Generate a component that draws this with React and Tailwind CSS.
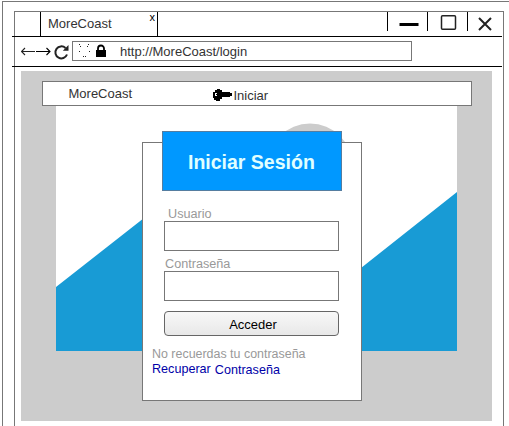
import React from "react";

function TitleBar() {
  return (
    <div className="-ml-[3px] flex h-[25px] w-[490px] border-b border-black pl-[3px]">
      <div className="w-[26px] shrink-0 border-r border-black" />
      <div className="flex w-[117px] shrink-0 justify-between border-r border-black pl-[7px] pr-[2px]">
        <span className="text-[13px] leading-[23px]">MoreCoast</span>
        <span className="text-[11px] leading-[10px] text-black">x</span>
      </div>
      <div className="ml-auto flex h-[19px] shrink-0">
        <div className="w-10 border-l border-black">
          <svg width="39" height="19" viewBox="0 0 39 19">
            <path d="M11.500 12.500H30.500" stroke="#000" strokeWidth="3" />
          </svg>
        </div>
        <div className="w-10 border-l border-black">
          <svg width="39" height="19" viewBox="0 0 39 19">
            <rect x="13.500" y="3.800" width="14" height="13.500" rx="1" fill="none" stroke="#222" strokeWidth="1.500" />
          </svg>
        </div>
        <div className="w-[35px] border-l border-black">
          <svg width="34" height="19" viewBox="0 0 34 19">
            <path d="M11 6L23 18M23 6L11 18" stroke="#222" strokeWidth="2" />
          </svg>
        </div>
      </div>
    </div>
  );
}

function AddressBar() {
  return (
    <div className="-ml-[3px] flex h-[30px] w-[490px] border-b border-black pl-[9px] pt-1">
      <svg className="shrink-0" width="51" height="22" viewBox="0 0 51 22" fill="none" stroke="#222">
        <path d="M.5 10.500H14M4 7L.5 10.500L4 14" strokeWidth="1.100" />
        <path d="M15 10.500H29M25.500 7L29 10.500L25.500 14" stroke="#000" strokeWidth="1.100" />
        <path d="M44.500 7A6 6 0 1 0 46 13.500" strokeWidth="2" />
        <path d="M47.500 4V9.800H41.800Z" fill="#222" stroke="none" />
      </svg>
      <div className="flex h-5 w-[340px] shrink-0 border border-[#777]">
        <svg className="shrink-0" width="47" height="18" viewBox="0 0 47 18">
          <path
            d="M6 2h1v1H6zM15 2h1v1h-1zM7 4h1v1H7zM14 4h1v1h-1zM6 9h1v1H6zM16 9h1v1h-1zM10 14h1v1h-1zM12 14h1v1h-1z"
            fill="#222"
          />
          <path d="M23 8h10v7H23z" />
          <path d="M25 9V6.500a3 3 0 0 1 6 0V9" fill="none" stroke="#000" strokeWidth="1.800" />
        </svg>
        <span className="text-[13px] leading-[19px]">http://MoreCoast/login</span>
      </div>
    </div>
  );
}

function NavBar() {
  return (
    <div className="mx-auto flex h-[25px] w-[430px] border border-[#777] bg-white pl-[26px]">
      <span className="w-[143px] text-[13px] leading-[23px]">MoreCoast</span>
      <svg className="mt-[6px] shrink-0" width="21" height="14" viewBox="0 0 21 14">
        <path d="M3 2H5V1H8V2H10V4H18V5H20V8H18V9H10V11H8V13H4V12H2V10H1V4H3Z" />
        <path d="M3 5H5V8H3Z" fill="#fff" />
        <path d="M4 6H5V7H4Z" />
      </svg>
      <span className="ml-px text-[13px] leading-[27px]">Iniciar</span>
    </div>
  );
}

function Backdrop() {
  return (
    <svg className="col-start-1 row-start-1 ml-[35px]" width="401" height="245" viewBox="0 0 401 245">
      <rect width="401" height="245" fill="#fff" />
      <circle cx="254" cy="60" r="42.500" fill="#ccc" />
      <path d="M0 181L125 83L249 204L305 162L401 86V245H0Z" fill="#189bd5" />
    </svg>
  );
}

function LoginCard() {
  return (
    <div className="col-start-1 row-start-1 ml-[121px] mt-9 h-[259px] w-[220px] border border-[#777] bg-white">
      <h1 className="-mt-3 ml-[19px] h-[60px] w-[180px] border border-[#557da0] bg-[#0098ff] pl-[25px] text-[19.500px] leading-[60px] font-bold whitespace-nowrap text-[#e0ffff]">
        Iniciar Sesión
      </h1>
      <div className="ml-[21px] flex w-[175px] flex-col text-[12.650px] text-[#999]">
        <label htmlFor="user" className="h-[30px] pt-[15px] pl-1 leading-[16px]">Usuario</label>
        <input id="user" className="h-[30px] border border-[#777] bg-white px-2 outline-none" />
        <label htmlFor="password" className="h-5 pt-[5px] pl-px leading-[16px]">Contraseña</label>
        <input id="password" type="password" className="h-[30px] border border-[#777] bg-white px-2 outline-none" />
        <button className="mt-[10px] h-[25px] rounded-[4px] border border-[#666] bg-linear-to-b from-[#f8f8f8] to-[#e8e8e8] pl-[3px] text-[13px] leading-[25px] text-black">
          Acceder
        </button>
      </div>
      <p className="mt-[10px] ml-[9px] text-[12.450px] leading-4 whitespace-nowrap text-[#999]">No recuerdas tu contraseña</p>
      <a className="ml-[9px] flex gap-1 text-[12.600px] leading-[15px] whitespace-nowrap text-[#0000a8]">
        <span>Recuperar</span>
        <span className="pt-px">Contraseña</span>
      </a>
    </div>
  );
}

export default function App() {
  return (
    <div className="h-[426px] w-[509px] overflow-hidden bg-white pt-px pl-[2px] font-['Liberation_Sans',Arial,sans-serif] text-[#333]">
      <div className="h-[425px] border-t border-l border-[#777] pt-[9px] pl-[11px]">
        <div className="h-[420px] w-[490px] border border-[#777]">
          <TitleBar />
          <AddressBar />
          <main className="mt-1 ml-[6px] h-[350px] w-[471px] bg-[#ccc] pt-[10px]">
            <NavBar />
            <div className="grid items-start justify-items-start">
              <Backdrop />
              <LoginCard />
            </div>
          </main>
        </div>
      </div>
    </div>
  );
}
